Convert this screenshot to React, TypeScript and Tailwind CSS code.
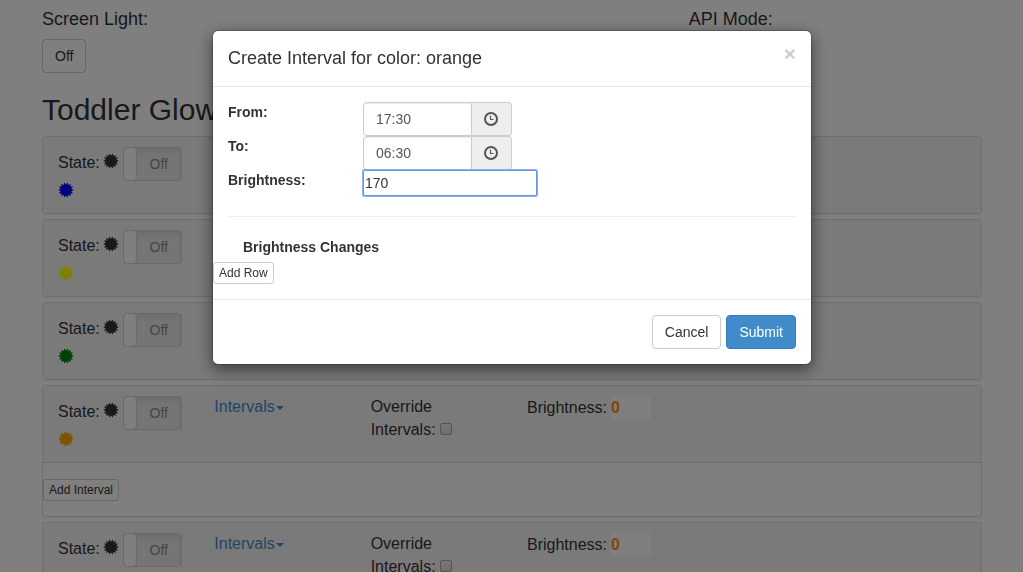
import { useState } from "react";

const channels = [
  { name: "blue", icon: "text-[#0000ff]", open: false },
  { name: "yellow", icon: "text-[#ffff00]", open: false },
  { name: "green", icon: "text-[#008000]", open: false },
  { name: "orange", icon: "text-[#ffa500]", open: true },
  { name: "white", icon: "text-white", open: false },
];

const SPIKES = 14;
const burst = Array.from({ length: SPIKES * 2 }, (_, i) => {
  const r = i % 2 ? 5.5 : 7.8;
  const a = ((i + 1) * Math.PI) / SPIKES - Math.PI / 2;
  return `${(8 + r * Math.cos(a)).toFixed(2)},${(8 + r * Math.sin(a)).toFixed(2)}`;
}).join(" ");

function Certificate({ className }: { className: string }) {
  return (
    <svg viewBox="0 0 16 16" className={`block size-4 ${className}`} aria-hidden="true">
      <polygon points={burst} fill="currentColor" />
    </svg>
  );
}

function Clock() {
  return (
    <svg viewBox="0 0 14 14" className="block size-[14px]" fill="none" stroke="#555" aria-hidden="true">
      <circle cx="7" cy="7" r="6" strokeWidth="2" />
      <path d="M6.5 3.5V7.5H9.5" strokeWidth="1.1" />
    </svg>
  );
}

const button =
  "rounded-[4px] border px-3 py-[6px] text-[14px] leading-5";
const smallButton =
  "block rounded-[3px] border border-[#ccc] bg-white px-[5px] py-px text-[12px] leading-[18px]";

function Channel({ name, icon, open }: { name: string; icon: string; open: boolean }) {
  return (
    <section className="mb-[5px] rounded-[4px] border border-[#ddd] bg-white shadow-[0_1px_1px_rgba(0,0,0,0.05)]">
      <div className="rounded-t-[3px] bg-[#f5f5f5] px-[15px] pt-[9px] pb-[10px] text-[16px] leading-[23px]">
        <div className="-mx-[15px] grid grid-cols-6">
          <div className="px-[15px] pt-px">
            <div className="flex items-start">
              <span className="leading-8">State:</span>
              <Certificate className="mt-[6px] ml-[3px] text-[#333]" />
              <button
                type="button"
                aria-label={`${name} state`}
                className="ml-1 flex h-[34px] w-[59px] overflow-hidden rounded-[4px] border border-[#d4d4d4] bg-[#eaeaea] text-[14px] text-[#8c8c8c] shadow-[inset_0_3px_5px_rgba(0,0,0,0.08)]"
              >
                <span className="h-full w-[13px] rounded-[4px] border-r border-[#d4d4d4] bg-white" />
                <span className="flex-1 leading-8">Off</span>
              </button>
            </div>
            <div className="h-[22px] pt-px">
              <Certificate className={icon} />
            </div>
          </div>
          <div className="px-[15px]">
            <a href="#intervals" className="inline-flex items-center gap-px text-[#428bca]">
              Intervals
              <span className="mt-[3px] border-x-4 border-t-4 border-x-transparent border-t-current" />
            </a>
          </div>
          <div className="px-[15px]">
            <label>
              Override Intervals:{" "}
              <input
                type="checkbox"
                className="size-3 appearance-none rounded-[2px] border border-[#aaa] bg-linear-to-b from-[#f0f0f0] to-[#ddd]"
              />
            </label>
          </div>
          <div className="px-[15px] pt-px">
            <label className="flex items-start gap-1">
              Brightness:
              <input
                defaultValue="0"
                className="h-6 w-10 shrink-0 bg-white font-bold text-[#ff8c00]"
              />
            </label>
          </div>
        </div>
      </div>
      {open && (
        <div className="border-t border-[#ddd] pt-4 pb-[15px]">
          <button type="button" className={smallButton}>
            Add Interval
          </button>
        </div>
      )}
    </section>
  );
}

function TimeField({ id, label, value }: { id: string; label: string; value: string }) {
  return (
    <div className="flex">
      <label htmlFor={id} className="w-[135px] font-bold">
        {label}
      </label>
      <div className="flex h-[34px] w-[149px]">
        <input
          id={id}
          defaultValue={value}
          className="w-full min-w-0 flex-1 rounded-l-[4px] border border-[#ccc] px-3 text-[#555] shadow-[inset_0_1px_1px_rgba(0,0,0,0.075)]"
        />
        <button
          type="button"
          aria-label={`Pick ${label}`}
          className="w-10 rounded-r-[4px] border border-l-0 border-[#ccc] bg-[#eee] pl-3"
        >
          <Clock />
        </button>
      </div>
    </div>
  );
}

export default function App() {
  const [brightness, setBrightness] = useState("170");
  return (
    <div className="h-screen overflow-hidden bg-white font-['Liberation_Sans',Arial,sans-serif] text-[14px] leading-5 text-[#333]">
      <main className="mx-auto max-w-[971px] pt-[9px] pr-[15px] pl-4">
        <div className="-mx-[15px] grid grid-cols-3">
          <div className="px-[15px]">
            <h4 className="mb-[10px] text-[18px] leading-5">Screen Light:</h4>
            <button type="button" className={`${button} border-[#ccc] bg-white`}>
              Off
            </button>
          </div>
          <div className="col-start-3 px-[15px]">
            <h4 className="text-[18px] leading-5">API Mode:</h4>
          </div>
        </div>
        <h2 className="mt-5 mb-[10px] text-[30px] leading-[33px]">Toddler Glow</h2>
        {channels.map((c) => (
          <Channel key={c.name} {...c} />
        ))}
      </main>

      <div className="fixed inset-0 bg-black/50 pt-[30px] pr-3 pl-[13px]">
        <div
          role="dialog"
          aria-labelledby="dialog-title"
          className="mx-auto max-w-[600px] rounded-[6px] border border-black/20 bg-white bg-clip-padding shadow-[0_5px_15px_rgba(0,0,0,0.5)]"
        >
          <header className="flex items-start justify-between border-b border-[#e5e5e5] p-[15px]">
            <h4 id="dialog-title" className="text-[18px] leading-[25px]">
              Create Interval for color: orange
            </h4>
            <button
              type="button"
              aria-label="Close"
              className="text-[21px] leading-4 font-bold text-black opacity-20"
            >
              ×
            </button>
          </header>
          <div className="p-[15px]">
            <TimeField id="from" label="From:" value="17:30" />
            <TimeField id="to" label="To:" value="06:30" />
            <div className="flex">
              <label htmlFor="brightness" className="w-[135px] font-bold">
                Brightness:
              </label>
              <input
                id="brightness"
                value={brightness}
                onChange={(e) => setBrightness(e.target.value)}
                className="h-[26px] w-[174px] rounded-[1px] border border-[#6b96dc] px-px ring-1 ring-[#8ab2f3] outline-none"
              />
            </div>
            <hr className="my-5 border-[#eee]" />
            <h5 className="mb-[5px] px-[15px] font-bold">Brightness Changes</h5>
            <div className="-mx-[15px]">
              <button type="button" className={smallButton}>
                Add Row
              </button>
            </div>
          </div>
          <footer className="flex justify-end gap-[5px] border-t border-[#e5e5e5] p-[15px]">
            <button type="button" className={`${button} border-[#ccc] bg-white`}>
              Cancel
            </button>
            <button type="submit" className={`${button} border-[#357ebd] bg-[#428bca] text-white`}>
              Submit
            </button>
          </footer>
        </div>
      </div>
    </div>
  );
}
